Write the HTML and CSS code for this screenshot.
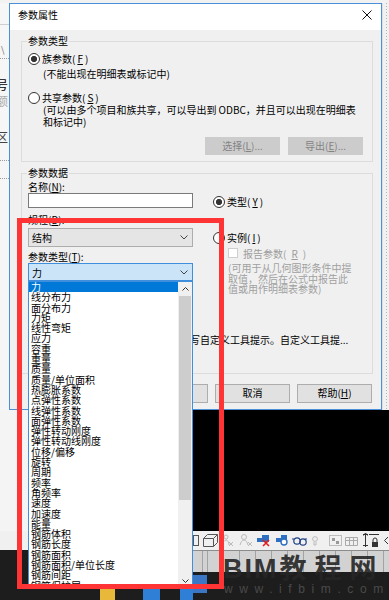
FILE: index.html
```html
<!DOCTYPE html>
<html lang="zh-CN">
<head>
    <meta charset="UTF-8">
    <meta name="viewport" content="width=device-width, initial-scale=1.0">
    <title>参数属性</title>
    <link rel="stylesheet" href="styles.css">
</head>
<body>
<div class="screen">
    <div class="top-strip"></div>

    <div class="workarea">
        <!-- Revit properties panel, mostly hidden behind the dialog -->
        <div class="side-panel">
            <span class="side-rule"></span>
            <span class="side-glyph slash">\</span>
            <span class="side-dots first"></span>
            <span class="side-glyph hao">号</span>
            <span class="side-glyph faint">额</span>
            <span class="side-glyph qu">区</span>
            <span class="side-dots second"></span>
            <span class="side-dots third"></span>
        </div>

        <div class="dialog">
            <div class="titlebar">
                <span class="title">参数属性</span>
                <svg class="close" width="10" height="10" viewBox="0 0 10 10">
                    <path d="M0.5 0.5L9.5 9.5M9.5 0.5L0.5 9.5" stroke="#111" stroke-width="1" fill="none"/>
                </svg>
            </div>

            <div class="dialog-body">
                <fieldset class="group group-type">
                    <legend>参数类型</legend>
                    <div class="radio-row"><span class="radio checked"></span>族参数(<u>F</u>)</div>
                    <div class="hint">(不能出现在明细表或标记中)</div>
                    <div class="radio-row shared"><span class="radio"></span>共享参数(<u>S</u>)</div>
                    <div class="hint wide">(可以由多个项目和族共享，可以导出到 ODBC，并且可以出现在明细表<br>和标记中)</div>
                    <div class="group-buttons">
                        <button class="btn" disabled>选择(<u>L</u>)...</button>
                        <button class="btn" disabled>导出(<u>E</u>)...</button>
                    </div>
                </fieldset>

                <fieldset class="group group-data">
                    <legend>参数数据</legend>
                    <div class="data-columns">
                        <div class="col-left">
                            <label class="field-label">名称(<u>N</u>):</label>
                            <div class="textbox"></div>
                            <label class="field-label discipline">规程(<u>D</u>):</label>
                            <div class="combo">结构
                                <svg width="8" height="5" viewBox="0 0 8 5"><polyline points="0.5,0.5 4,4 7.5,0.5" fill="none" stroke="#444"/></svg>
                            </div>
                            <label class="field-label ptype">参数类型(<u>T</u>):</label>
                            <div class="combo open">力
                                <svg width="8" height="5" viewBox="0 0 8 5"><polyline points="0.5,0.5 4,4 7.5,0.5" fill="none" stroke="#444"/></svg>
                            </div>
                        </div>
                        <div class="col-right">
                            <div class="radio-row type-row"><span class="radio checked"></span>类型(<u>Y</u>)</div>
                            <div class="radio-row instance-row"><span class="radio"></span>实例(<u>I</u>)</div>
                            <div class="check-row"><span class="checkbox"></span>报告参数(<u>R</u>)</div>
                            <div class="report-hint">(可用于从几何图形条件中提<br>取值，然后在公式中报告此<br>值或用作明细表参数)</div>
                        </div>
                    </div>
                    <div class="tooltip-text">编辑此参数以编写自定义工具提示。自定义工具提...</div>
                </fieldset>

                <div class="dialog-buttons">
                    <button class="btn">确定</button>
                    <button class="btn">取消</button>
                    <button class="btn">帮助(<u>H</u>)</button>
                </div>
            </div>
        </div>

        <div class="side-panel right"></div>
    </div>

    <div class="canvas">
        <div class="canvas-left"></div>
        <div class="canvas-view"></div>
    </div>

    <div class="toolbar">
        <svg width="196" height="19" viewBox="0 0 196 19">
            <rect x="0.5" y="4.5" width="5" height="10" fill="none" stroke="#555"/>
            <path d="M10.5 7.5h10v8h-10zM10.5 7.5l4-4h10l-4 4M20.5 15.5l4-4v-8" fill="none" stroke="#555"/>
            <circle cx="33" cy="6" r="2" fill="none" stroke="#bbb"/>
            <path d="M30 14c0-3 1.5-5 3-5s3 2 3 5M36 11l4 4M40 11l-4 4" fill="none" stroke="#bbb"/>
            <circle cx="51" cy="6" r="2.5" fill="none" stroke="#bbb"/>
            <path d="M47 14c1-3 2-5 4-5s3 2 4 5M55 11l4 4M59 11l-4 4" fill="none" stroke="#bbb"/>
            <path d="M64 7h5v-3h7v7h-12z" fill="#2f6fc2"/>
            <path d="M70 9l6 6M76 9l-6 6" stroke="#e02020" stroke-width="1.6"/>
            <path d="M83 7h5v-3h6v7h-11z" fill="#2f6fc2"/>
            <circle cx="91" cy="11" r="3" fill="#fff" stroke="#2f6fc2" stroke-width="1.4"/>
            <path d="M99 8l2 0M112 8l2 0" stroke="#1c3f80"/>
            <circle cx="104" cy="10" r="3.2" fill="none" stroke="#1c3f80" stroke-width="1.2"/>
            <circle cx="110" cy="11" r="3.2" fill="none" stroke="#1c3f80" stroke-width="1.2"/>
            <circle cx="122" cy="8" r="2.4" fill="none" stroke="#bbb"/>
            <path d="M121 11v3h2v-3" fill="none" stroke="#bbb"/>
            <rect x="136.5" y="4.5" width="12" height="10" fill="none" stroke="#888" stroke-dasharray="1 1"/>
            <rect x="139" y="7" width="3" height="3" fill="#999"/>
            <rect x="143" y="10" width="3" height="3" fill="#999"/>
            <path d="M152.5 6.5h12v8h-12zM152.5 9.5h12M156.5 6.5v8M160.5 6.5v8" fill="none" stroke="#aaa"/>
            <path d="M172.5 2v14M170 3.5h5M170 14.5h5M172.5 2l-2 2.5M172.5 2l2 2.5M176 3.5h10" fill="none" stroke="#333"/>
            <rect x="179" y="11" width="6" height="5" fill="#333"/>
            <path d="M180 11v-2a2 2 0 0 1 4 0v2" fill="none" stroke="#333"/>
            <polyline points="195,6 191.5,9.5 195,13" fill="none" stroke="#333"/>
        </svg>
    </div>

    <div class="statusbar">
        <div class="status-left">
            <span class="task-icon yellow"></span>
            <span class="task-icon blue"></span>
            <span class="task-icon blue small"></span>
        </div>
        <div class="status-right">
            <div class="view-grid"></div>
            <div class="taskbar">
                <span class="task-app"></span>
                <span class="site-url">www.ifbim.com</span>
            </div>
        </div>
    </div>

    <div class="watermark"><span class="wm-latin">BIM</span>教程网</div>

    <!-- open dropdown of 参数类型 -->
    <div class="dropdown">
        <ul class="options">
            <li class="selected">力</li>
            <li>线分布力</li>
            <li>面分布力</li>
            <li>力矩</li>
            <li>线性弯矩</li>
            <li>应力</li>
            <li>容重</li>
            <li>重量</li>
            <li>质量</li>
            <li>质量/单位面积</li>
            <li>热膨胀系数</li>
            <li>点弹性系数</li>
            <li>线弹性系数</li>
            <li>面弹性系数</li>
            <li>弹性转动刚度</li>
            <li>弹性转动线刚度</li>
            <li>位移/偏移</li>
            <li>旋转</li>
            <li>周期</li>
            <li>频率</li>
            <li>角频率</li>
            <li>速度</li>
            <li>加速度</li>
            <li>能量</li>
            <li>钢筋体积</li>
            <li>钢筋长度</li>
            <li>钢筋面积</li>
            <li>钢筋面积/单位长度</li>
            <li>钢筋间距</li>
            <li>钢筋保护层</li>
        </ul>
        <div class="scrollbar">
            <div class="scroll-btn">
                <svg width="7" height="4" viewBox="0 0 7 4"><polyline points="0.5,3.5 3.5,0.5 6.5,3.5" fill="none" stroke="#333"/></svg>
            </div>
            <div class="scroll-track"><div class="scroll-thumb"></div></div>
            <div class="scroll-btn">
                <svg width="7" height="4" viewBox="0 0 7 4"><polyline points="0.5,0.5 3.5,3.5 6.5,0.5" fill="none" stroke="#333"/></svg>
            </div>
        </div>
    </div>

    <div class="annotation"></div>
</div>
</body>
</html>
```

FILE: styles.css
```css
* {
    box-sizing: border-box;
}
body {
    margin: 0;
    width: 389px;
    height: 600px;
    overflow: hidden;
    font-family: "Noto Sans CJK SC", "Liberation Sans", sans-serif;
    font-size: 10px;
    color: #000;
    background: #1d1d1d;
}
.screen {
    position: relative;
    width: 389px;
    height: 600px;
    display: flex;
    flex-direction: column;
}
.top-strip {
    height: 3px;
    flex-shrink: 0;
    background: #f2f2f2;
}
.workarea {
    height: 407px;
    flex-shrink: 0;
    display: flex;
}

/* side panels */
.side-panel {
    width: 9px;
    background: #f6f6f6;
    overflow: hidden;
    display: flex;
    flex-direction: column;
}
.side-panel.right {
    width: 7px;
    background: #f1f1f1;
    border-left: 1px solid #e0e0e0;
    background-image: repeating-linear-gradient(to bottom, #b5b5b5 0 1px, transparent 1px 3px);
    background-size: 1px 100%;
    background-position: 3px 0;
    background-repeat: no-repeat;
}
.side-rule {
    display: block;
    height: 1px;
    margin-top: 21px;
    background: #cfcfcf;
}
.side-dots {
    display: block;
    height: 1px;
    border-top: 1px dotted #9a9a9a;
}
.side-dots.first {
    margin-top: 3px;
}
.side-dots.second {
    margin-top: 16px;
}
.side-dots.third {
    margin-top: 17px;
}
.side-glyph {
    display: block;
    font-size: 12px;
    line-height: 14px;
    margin-left: -4px;
    white-space: nowrap;
}
.side-glyph.slash {
    font-size: 9px;
    line-height: 10px;
    margin-top: 20px;
    margin-left: 1px;
    color: #666;
}
.side-glyph.hao {
    margin-top: 19px;
}
.side-glyph.faint {
    margin-top: 2px;
    color: #aaa;
}
.side-glyph.qu {
    margin-top: 22px;
    color: #444;
}

/* dialog */
.dialog {
    width: 373px;
    border: 1px solid #4a8fd8;
    background: #f0f0f0;
    display: flex;
    flex-direction: column;
}
.titlebar {
    height: 26px;
    flex-shrink: 0;
    background: #fff;
    display: flex;
    align-items: center;
    justify-content: space-between;
    padding: 0 9px 4px 8px;
}
.title {
    line-height: 12px;
}
.dialog-body {
    flex: 1;
    display: flex;
    flex-direction: column;
    padding: 0 8px 0 11px;
}
.group {
    margin: 0;
    min-width: 0;
    border: 1px solid #dcdcdc;
    padding: 6px 9px 6px 6px;
}
.group legend {
    padding: 0 1px;
    margin-left: -1px;
    line-height: 12px;
}
.group-type {
    margin-top: 5px;
}
.group-data {
    margin-top: 5px;
    padding: 2px 9px 28px 6px;
}
.radio-row {
    display: flex;
    align-items: center;
    gap: 2px;
    height: 12px;
    line-height: 12px;
    white-space: nowrap;
}
.radio {
    width: 12px;
    height: 12px;
    flex-shrink: 0;
    border: 1px solid #333;
    border-radius: 50%;
    background: #fff;
}
.radio.checked {
    background: radial-gradient(circle, #333 0 2.8px, #fff 3.3px);
}
.hint {
    margin-top: 3px;
    padding-left: 15px;
    line-height: 11px;
    white-space: nowrap;
}
.hint.wide {
    margin-top: 0;
    line-height: 11.5px;
}
.radio-row.shared {
    margin-top: 13px;
}
.group-buttons {
    display: flex;
    justify-content: flex-end;
    gap: 8px;
    margin-top: 10px;
}
.btn {
    width: 75px;
    height: 18px;
    padding: 0;
    font-family: inherit;
    font-size: 10px;
    line-height: 16px;
    color: #000;
    background: #e1e1e1;
    border: 1px solid #adadad;
}
.btn:disabled {
    background: #cccccc;
    border-color: #cccccc;
    color: #838383;
}
.data-columns {
    display: flex;
    gap: 20px;
}
.col-left {
    width: 165px;
    flex-shrink: 0;
    display: flex;
    flex-direction: column;
}
.col-right {
    display: flex;
    flex-direction: column;
}
.field-label {
    height: 12px;
    line-height: 12px;
    white-space: nowrap;
}
.field-label.discipline {
    margin-top: 6px;
}
.field-label.ptype {
    margin-top: 4px;
}
.textbox {
    height: 15px;
    background: #fff;
    border: 1px solid #7a7a7a;
}
.combo {
    height: 19px;
    margin-top: 2px;
    display: flex;
    align-items: center;
    justify-content: space-between;
    padding: 0 4px 0 3px;
    background: #e5e5e5;
    border: 1px solid #adadad;
}
.combo.open {
    height: 18px;
    margin-top: 0;
    background: #cce4f7;
    border-color: #3f8fdc;
}
.type-row {
    margin-top: 15px;
}
.instance-row {
    margin-top: 24px;
}
.check-row {
    margin-top: 3px;
    padding-left: 15px;
    display: flex;
    align-items: center;
    gap: 5px;
    height: 12px;
    color: #9d9d9d;
    white-space: nowrap;
}
.checkbox {
    width: 10px;
    height: 10px;
    background: #fff;
    border: 1px solid #cfcfcf;
}
.report-hint {
    margin-top: 4px;
    padding-left: 15px;
    line-height: 10.5px;
    color: #a0a0a0;
    white-space: nowrap;
}
.tooltip-text {
    margin-top: 39px;
    padding-left: 92px;
    line-height: 11px;
    white-space: nowrap;
    overflow: hidden;
}
.dialog-buttons {
    display: flex;
    justify-content: flex-end;
    gap: 7px;
    margin: 10px 1px 0 0;
}
.dialog-buttons .btn {
    height: 19px;
}

/* Revit background below the dialog */
.canvas {
    height: 121px;
    flex-shrink: 0;
    display: flex;
}
.canvas-left {
    width: 193px;
    background: #f4f4f4;
}
.canvas-view {
    flex: 1;
    background: #000;
}
.toolbar {
    height: 19px;
    flex-shrink: 0;
    padding-left: 193px;
    background: #f0f0f0;
}
.toolbar svg {
    display: block;
}
.statusbar {
    flex: 1;
    display: flex;
}
.status-left {
    width: 193px;
    display: flex;
    align-items: flex-end;
    padding-left: 100px;
    background: #1d1d1d;
}
.task-icon {
    width: 15px;
    height: 11px;
}
.task-icon.yellow {
    background: #e8b83a;
}
.task-icon.blue {
    width: 17px;
    margin-left: 28px;
    background: #2f7fd6;
}
.task-icon.blue.small {
    width: 13px;
    margin-left: 20px;
}
.status-right {
    flex: 1;
    display: flex;
    flex-direction: column;
}
.view-grid {
    height: 22px;
    border-top: 1px solid #8c8c8c;
    background-color: #d2d2d2;
    background-image: repeating-linear-gradient(to right, #a2a2a2 0 1px, transparent 1px 16px);
    background-position: 14px 0;
}
.taskbar {
    flex: 1;
    display: flex;
    align-items: flex-start;
    padding-top: 3px;
    background: #1d1d1d;
}
.task-app {
    width: 14px;
    height: 18px;
    background: #3a76c4;
}
.site-url {
    margin: 8px 0 0 17px;
    font-family: "Liberation Sans", sans-serif;
    font-size: 12px;
    line-height: 12px;
    letter-spacing: 6.6px;
    color: #4a4a4a;
}
.watermark {
    position: absolute;
    left: 223px;
    top: 553px;
    font-size: 27px;
    line-height: 28px;
    font-weight: bold;
    letter-spacing: 8px;
    color: rgba(38, 38, 38, 0.92);
    white-space: nowrap;
}
.wm-latin {
    font-family: "Liberation Sans", sans-serif;
    letter-spacing: 2px;
    margin-right: 1px;
}

/* open combo list */
.dropdown {
    position: absolute;
    left: 28px;
    top: 281px;
    width: 165px;
    height: 308px;
    display: flex;
    background: #fff;
    border: 1px solid #3f8fdc;
}
.options {
    flex: 1;
    margin: 0;
    padding: 0;
    list-style: none;
    overflow: hidden;
}
.options li {
    height: 10.3px;
    line-height: 10.3px;
    padding-left: 2px;
    white-space: nowrap;
}
.options li.selected {
    background: #0078d7;
    color: #fff;
}
.scrollbar {
    width: 14px;
    display: flex;
    flex-direction: column;
    background: #f0f0f0;
}
.scroll-btn {
    height: 14px;
    display: flex;
    align-items: center;
    justify-content: center;
}
.scroll-btn svg {
    display: block;
}
.scroll-track {
    flex: 1;
    padding: 0 1px;
}
.scroll-thumb {
    height: 204px;
    background: #cdcdcd;
}

/* red highlight drawn over the screenshot */
.annotation {
    position: absolute;
    left: 17px;
    top: 218px;
    width: 207px;
    height: 371px;
    border: 5px solid #ff3535;
}
```
